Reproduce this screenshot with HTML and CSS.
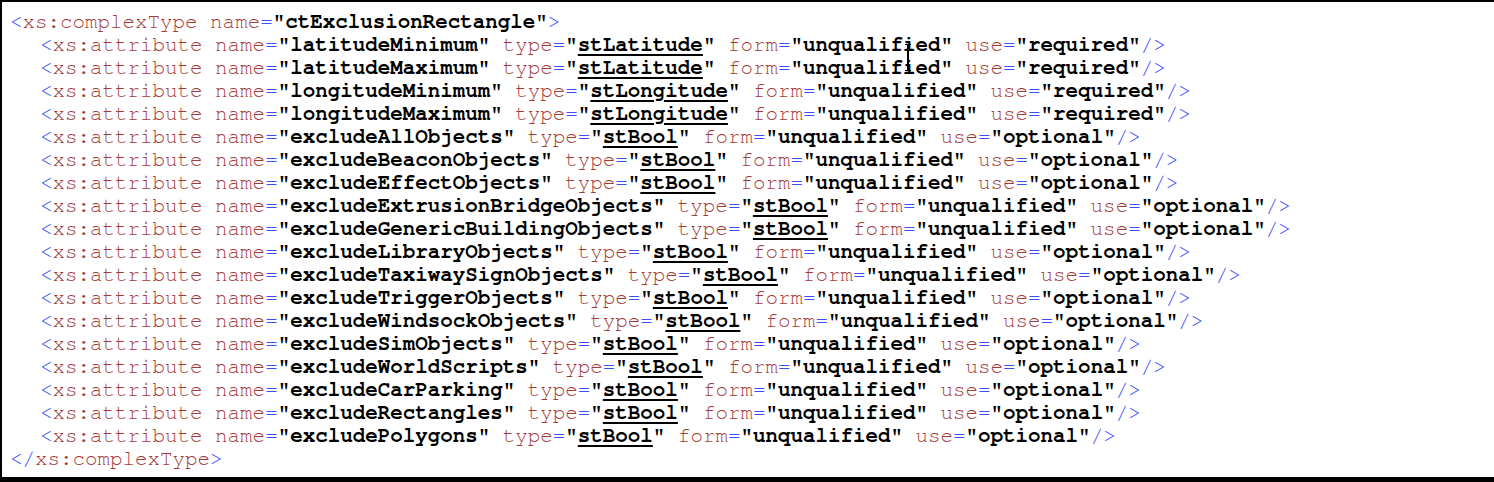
FILE: index.html
```html
<!DOCTYPE html>
<html>
<head>
<meta charset="utf-8">
<link rel="stylesheet" href="styles.css">
</head>
<body>
<div class="frame">
<div class="xml">
<div class="line"><span class="m">&lt;</span><span class="t">xs:complexType</span><span class="t"> name</span><span class="m">=</span><b>"ctExclusionRectangle"</b><span class="m">&gt;</span></div>
<div class="children">
<div class="line"><span class="m">&lt;</span><span class="t">xs:attribute</span><span class="t"> name</span><span class="m">=</span><b>"latitudeMinimum"</b><span class="t"> type</span><span class="m">=</span><b>"<span class="u">stLatitude</span>"</b><span class="t"> form</span><span class="m">=</span><b>"unqualified"</b><span class="t"> use</span><span class="m">=</span><b>"required"</b><span class="m">/&gt;</span></div>
<div class="line"><span class="m">&lt;</span><span class="t">xs:attribute</span><span class="t"> name</span><span class="m">=</span><b>"latitudeMaximum"</b><span class="t"> type</span><span class="m">=</span><b>"<span class="u">stLatitude</span>"</b><span class="t"> form</span><span class="m">=</span><b>"unqualified"</b><span class="t"> use</span><span class="m">=</span><b>"required"</b><span class="m">/&gt;</span></div>
<div class="line"><span class="m">&lt;</span><span class="t">xs:attribute</span><span class="t"> name</span><span class="m">=</span><b>"longitudeMinimum"</b><span class="t"> type</span><span class="m">=</span><b>"<span class="u">stLongitude</span>"</b><span class="t"> form</span><span class="m">=</span><b>"unqualified"</b><span class="t"> use</span><span class="m">=</span><b>"required"</b><span class="m">/&gt;</span></div>
<div class="line"><span class="m">&lt;</span><span class="t">xs:attribute</span><span class="t"> name</span><span class="m">=</span><b>"longitudeMaximum"</b><span class="t"> type</span><span class="m">=</span><b>"<span class="u">stLongitude</span>"</b><span class="t"> form</span><span class="m">=</span><b>"unqualified"</b><span class="t"> use</span><span class="m">=</span><b>"required"</b><span class="m">/&gt;</span></div>
<div class="line"><span class="m">&lt;</span><span class="t">xs:attribute</span><span class="t"> name</span><span class="m">=</span><b>"excludeAllObjects"</b><span class="t"> type</span><span class="m">=</span><b>"<span class="u">stBool</span>"</b><span class="t"> form</span><span class="m">=</span><b>"unqualified"</b><span class="t"> use</span><span class="m">=</span><b>"optional"</b><span class="m">/&gt;</span></div>
<div class="line"><span class="m">&lt;</span><span class="t">xs:attribute</span><span class="t"> name</span><span class="m">=</span><b>"excludeBeaconObjects"</b><span class="t"> type</span><span class="m">=</span><b>"<span class="u">stBool</span>"</b><span class="t"> form</span><span class="m">=</span><b>"unqualified"</b><span class="t"> use</span><span class="m">=</span><b>"optional"</b><span class="m">/&gt;</span></div>
<div class="line"><span class="m">&lt;</span><span class="t">xs:attribute</span><span class="t"> name</span><span class="m">=</span><b>"excludeEffectObjects"</b><span class="t"> type</span><span class="m">=</span><b>"<span class="u">stBool</span>"</b><span class="t"> form</span><span class="m">=</span><b>"unqualified"</b><span class="t"> use</span><span class="m">=</span><b>"optional"</b><span class="m">/&gt;</span></div>
<div class="line"><span class="m">&lt;</span><span class="t">xs:attribute</span><span class="t"> name</span><span class="m">=</span><b>"excludeExtrusionBridgeObjects"</b><span class="t"> type</span><span class="m">=</span><b>"<span class="u">stBool</span>"</b><span class="t"> form</span><span class="m">=</span><b>"unqualified"</b><span class="t"> use</span><span class="m">=</span><b>"optional"</b><span class="m">/&gt;</span></div>
<div class="line"><span class="m">&lt;</span><span class="t">xs:attribute</span><span class="t"> name</span><span class="m">=</span><b>"excludeGenericBuildingObjects"</b><span class="t"> type</span><span class="m">=</span><b>"<span class="u">stBool</span>"</b><span class="t"> form</span><span class="m">=</span><b>"unqualified"</b><span class="t"> use</span><span class="m">=</span><b>"optional"</b><span class="m">/&gt;</span></div>
<div class="line"><span class="m">&lt;</span><span class="t">xs:attribute</span><span class="t"> name</span><span class="m">=</span><b>"excludeLibraryObjects"</b><span class="t"> type</span><span class="m">=</span><b>"<span class="u">stBool</span>"</b><span class="t"> form</span><span class="m">=</span><b>"unqualified"</b><span class="t"> use</span><span class="m">=</span><b>"optional"</b><span class="m">/&gt;</span></div>
<div class="line"><span class="m">&lt;</span><span class="t">xs:attribute</span><span class="t"> name</span><span class="m">=</span><b>"excludeTaxiwaySignObjects"</b><span class="t"> type</span><span class="m">=</span><b>"<span class="u">stBool</span>"</b><span class="t"> form</span><span class="m">=</span><b>"unqualified"</b><span class="t"> use</span><span class="m">=</span><b>"optional"</b><span class="m">/&gt;</span></div>
<div class="line"><span class="m">&lt;</span><span class="t">xs:attribute</span><span class="t"> name</span><span class="m">=</span><b>"excludeTriggerObjects"</b><span class="t"> type</span><span class="m">=</span><b>"<span class="u">stBool</span>"</b><span class="t"> form</span><span class="m">=</span><b>"unqualified"</b><span class="t"> use</span><span class="m">=</span><b>"optional"</b><span class="m">/&gt;</span></div>
<div class="line"><span class="m">&lt;</span><span class="t">xs:attribute</span><span class="t"> name</span><span class="m">=</span><b>"excludeWindsockObjects"</b><span class="t"> type</span><span class="m">=</span><b>"<span class="u">stBool</span>"</b><span class="t"> form</span><span class="m">=</span><b>"unqualified"</b><span class="t"> use</span><span class="m">=</span><b>"optional"</b><span class="m">/&gt;</span></div>
<div class="line"><span class="m">&lt;</span><span class="t">xs:attribute</span><span class="t"> name</span><span class="m">=</span><b>"excludeSimObjects"</b><span class="t"> type</span><span class="m">=</span><b>"<span class="u">stBool</span>"</b><span class="t"> form</span><span class="m">=</span><b>"unqualified"</b><span class="t"> use</span><span class="m">=</span><b>"optional"</b><span class="m">/&gt;</span></div>
<div class="line"><span class="m">&lt;</span><span class="t">xs:attribute</span><span class="t"> name</span><span class="m">=</span><b>"excludeWorldScripts"</b><span class="t"> type</span><span class="m">=</span><b>"<span class="u">stBool</span>"</b><span class="t"> form</span><span class="m">=</span><b>"unqualified"</b><span class="t"> use</span><span class="m">=</span><b>"optional"</b><span class="m">/&gt;</span></div>
<div class="line"><span class="m">&lt;</span><span class="t">xs:attribute</span><span class="t"> name</span><span class="m">=</span><b>"excludeCarParking"</b><span class="t"> type</span><span class="m">=</span><b>"<span class="u">stBool</span>"</b><span class="t"> form</span><span class="m">=</span><b>"unqualified"</b><span class="t"> use</span><span class="m">=</span><b>"optional"</b><span class="m">/&gt;</span></div>
<div class="line"><span class="m">&lt;</span><span class="t">xs:attribute</span><span class="t"> name</span><span class="m">=</span><b>"excludeRectangles"</b><span class="t"> type</span><span class="m">=</span><b>"<span class="u">stBool</span>"</b><span class="t"> form</span><span class="m">=</span><b>"unqualified"</b><span class="t"> use</span><span class="m">=</span><b>"optional"</b><span class="m">/&gt;</span></div>
<div class="line"><span class="m">&lt;</span><span class="t">xs:attribute</span><span class="t"> name</span><span class="m">=</span><b>"excludePolygons"</b><span class="t"> type</span><span class="m">=</span><b>"<span class="u">stBool</span>"</b><span class="t"> form</span><span class="m">=</span><b>"unqualified"</b><span class="t"> use</span><span class="m">=</span><b>"optional"</b><span class="m">/&gt;</span></div>
</div>
<div class="line"><span class="m">&lt;/</span><span class="t">xs:complexType</span><span class="m">&gt;</span></div>
</div>
<div class="cursor"></div>
</div>
</body>
</html>
```
FILE: styles.css
```css
html, body {
  margin: 0;
  padding: 0;
  background: #ffffff;
}

.frame {
  position: relative;
  box-sizing: border-box;
  width: 1494px;
  height: 482px;
  border-top: 2px solid #000000;
  border-left: 2px solid #000000;
  border-bottom: 5px solid #000000;
  background: #ffffff;
  overflow: hidden;
}

.xml {
  padding: 8px 0 0 8px;
  font-family: "Nimbus Mono PS", "Nimbus Mono L", "FreeMono", "Liberation Mono", monospace;
  font-size: 20.85px;
  line-height: 23px;
  color: #000000;
}

.line {
  white-space: pre;
  height: 23px;
}

.children {
  padding-left: 30px;
}

.m {
  color: #3a4dff;
}

.t {
  color: #a23a3a;
  font-weight: normal;
}

b {
  font-weight: bold;
  color: #000000;
}

.u {
  text-decoration: underline;
  text-decoration-thickness: 2px;
  text-underline-offset: 3px;
}

.cursor {
  position: absolute;
  left: 905px;
  top: 42px;
  width: 2px;
  height: 27px;
  background: #000000;
}

.cursor::before,
.cursor::after {
  content: "";
  position: absolute;
  left: -2px;
  width: 6px;
  height: 1px;
  background: #000000;
}

.cursor::before {
  top: 0;
}

.cursor::after {
  bottom: 0;
}
```
